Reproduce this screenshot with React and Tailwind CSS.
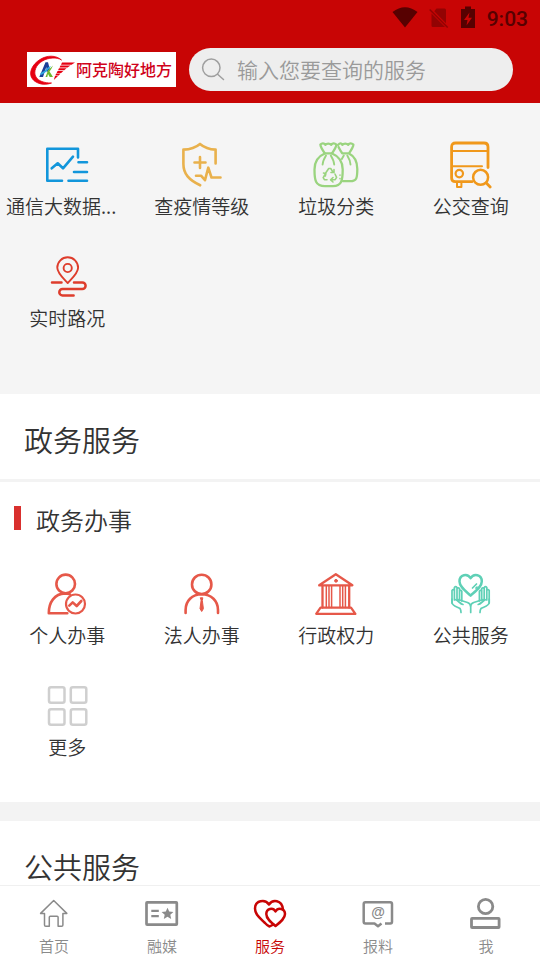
import React from "react";

function Icon({ color, children, width = 2.4 }) {
  return (
    <svg
      viewBox="0 0 48 48"
      className="size-12"
      fill="none"
      stroke={color}
      strokeWidth={width}
      strokeLinecap="round"
      strokeLinejoin="round"
      aria-hidden="true"
    >
      {children}
    </svg>
  );
}

const ChartIcon = () => (
  <Icon color="#1296db" width={2.6}>
    <path d="M35 16.5V7.7H4.3V39.7H19M8.7 27.3l6-5 5.3 5L30 15.7M35.5 21.3H44M31 31h13M25.5 39.7H44" />
  </Icon>
);

const ShieldIcon = () => (
  <Icon color="#e9b14c" width={2.6}>
    <path d="M37.6 22.5V8.6C31 8.3 26 6.3 22 2.9C18 6.3 12 8.3 5.4 8.6V23C5.4 33 11 39 22.2 44.3" />
    <path d="M22 16v11M16.5 21.5h11M18 34.7h5l4 4.5 3.3-12.5 3.2 9.8h9" />
  </Icon>
);

const BagsIcon = () => (
  <Icon color="#9ad47f" width={2.3}>
    <path d="M12.8 12.3C10.5 9 8.6 6 8.4 3.6C10 1.8 12 2 13.4 3.8C14.5 2.2 18 2.2 19.2 3.8C20.5 2 22.5 1.8 24.4 3.6C24.2 6 22.3 9 20 12.3Z" />
    <path d="M12.8 12.5C5.5 15.5 2.5 21 2.5 28.5C2.5 39 3.2 45.2 13 45.2h8C29.8 45.2 30.7 39 30.7 28.5C30.7 21 27.5 15.5 20 12.5" />
    <path d="M14 14.5c-1.5 2.5-3.2 5.5-3.4 9M18.8 14.5c1.5 2.5 3.2 5.5 3.4 9" strokeWidth="1.9" />
    <path d="M26 4C28 1.8 29.3 2.2 30.4 3.8C31.5 2.2 35 2.2 36.2 3.8C37.5 2 39.5 1.8 41.4 3.6C41.2 6 39.3 9 37 12.3H30.2C28.5 10 27.5 8 26.5 6M37 12.5C43 15.5 45.3 20 45.3 28C45.3 37 44.8 40.2 38 40.2H31" />
    <path d="M35.3 14.5c1.5 2.5 3 5.5 3.2 9M31.8 14.5l-2 3.5" strokeWidth="1.9" />
    <g strokeWidth="1.6">
      <path d="M14 31.5l2.7-4h2l2.2 3.4M22 28.5v3h-3M11.5 32l2.4.6-.6 2.4M13 33.5l-1.8 3.2 1.2 2H15M23 33l1.6 3.3-1.4 2.4h-4.4M21 36.5l-2.4 2.3 2.4 2.2" />
      <path d="M28 34v.2M28 37.5v.2" />
    </g>
  </Icon>
);

const BusIcon = () => (
  <Icon color="#f0981b" width={2.8}>
    <path d="M25 40.7H8.3Q4.6 40.7 4.6 37V6Q4.6 2 8.6 2H37Q41 2 41 6V26.5" />
    <path d="M5 10H40.5M5 25.2H35" strokeWidth="2" />
    <circle cx="12.3" cy="32.6" r="3.7" strokeWidth="2.2" />
    <path d="M10 41v5h4.4v-5" strokeWidth="2" />
    <circle cx="33.6" cy="36.3" r="7.5" strokeWidth="2.5" />
    <path d="M39.3 42l3.9 4" />
  </Icon>
);

const RouteIcon = () => (
  <Icon color="#de3d2c" width={1.9}>
    <path d="M24.7 30C20 25 14.3 20 14.3 14.7a10.4 10.4 0 0 1 20.8 0C35.1 20 29.4 25 24.7 30Z" />
    <circle cx="24.7" cy="15" r="4.1" />
    <path d="M9 29.4h9.5M31 29.4h8.3a3.3 3.3 0 0 1 0 6.6H19.5a3.2 3.2 0 0 0 0 6.4H30.6" strokeWidth="2.5" />
  </Icon>
);

const PersonIcon = () => (
  <Icon color="#e65849" width={2.6}>
    <circle cx="22.7" cy="13.9" r="9.3" />
    <path d="M24.3 43.2H5.8C5.8 32 11.5 24 22 23.4q3 0 5 1" />
    <circle cx="32.5" cy="34" r="9.5" strokeWidth="2.2" />
    <path d="M26.3 35.6l3.4-3.2 4 3.6 4.6-5" />
  </Icon>
);

const LegalIcon = () => (
  <Icon color="#e65849" width={2.6}>
    <circle cx="23.7" cy="14.4" r="9.7" />
    <path d="M7.6 43V40C7.6 31 14 24.3 23.7 24.3S40 31 40 40v3" />
    <path d="M22.6 27.8h2.2l-.5 2.7 1.1 8.2-1.7 2.8-1.7-2.8 1.1-8.2Z" fill="#e65849" strokeWidth="1" />
  </Icon>
);

const GovIcon = () => (
  <Icon color="#e65849" width={2.3}>
    <path d="M23.8 4.2L7.2 15.3H40.4Z" />
    <circle cx="24" cy="10.8" r="1.4" fill="#e65849" strokeWidth="1" />
    <path d="M10.5 16V37.5M37.2 16V37.5" />
    <path d="M14.3 16V37.5M17 16V37.5M19.6 16V37.5M28 16V37.5M30.7 16V37.5M33.4 16V37.5" strokeWidth="1.5" />
    <path d="M8.5 37.7H39L43.4 43.8H4.2Z" />
  </Icon>
);

const HandsIcon = () => (
  <Icon color="#5fd0b6" width={1.7}>
    <path d="M23.6 25.6C18 20.5 12.5 16.5 12.5 11.4C12.5 4.3 20.5 3 23.6 8.2C26.7 3 34.8 4.3 34.8 11.4C34.8 16.5 29.2 20.5 23.6 25.6Z" strokeWidth="2.5" />
    <path d="M25.5 18l4-4M29 18.2l1-1" />
    <path d="M5 33V20.5q1.2-1.6 2.4 0V30M7.4 21V17.5q1.3-1.6 2.6 0V30M10 18.5q1.3-1.4 2.5 0V30M12.5 21q1.2-1.2 2.3.2V31" />
    <path d="M5 29v3.5C5 36 11 37 13 38.5q1 1.5 1 4M8 29.5c3 .5 5 4.5 8 5M11 29.5l9.5 3q3 1.3 3 3.5" />
    <path d="M42.2 33V20.5q-1.2-1.6-2.4 0V30M39.8 21V17.5q-1.3-1.6-2.6 0V30M37.2 18.5q-1.3-1.4-2.5 0V30M34.7 21q-1.2-1.2-2.3.2V31" />
    <path d="M42.2 29v3.5C42.2 36 36 37 34 38.5q-1 1.5-1 4M39.2 29.5c-3 .5-5 4.5-8 5M36.2 29.5l-9.5 3q-3 1.3-3 3.5v6.5" />
  </Icon>
);

const MoreIcon = () => (
  <Icon color="#cfcfcf" width={2.5}>
    <rect x="6" y="5.2" width="15.5" height="15.5" rx="2" />
    <rect x="27.8" y="5.2" width="15.5" height="15.5" rx="2" />
    <rect x="6" y="27.2" width="15.5" height="15.5" rx="2" />
    <rect x="27.8" y="27.2" width="15.5" height="15.5" rx="2" />
  </Icon>
);

const quickServices = [
  { label: "通信大数据...", icon: ChartIcon, clipped: true },
  { label: "查疫情等级", icon: ShieldIcon },
  { label: "垃圾分类", icon: BagsIcon },
  { label: "公交查询", icon: BusIcon },
  { label: "实时路况", icon: RouteIcon },
];

const govServices = [
  { label: "个人办事", icon: PersonIcon },
  { label: "法人办事", icon: LegalIcon },
  { label: "行政权力", icon: GovIcon },
  { label: "公共服务", icon: HandsIcon },
  { label: "更多", icon: MoreIcon },
];

function ServiceGrid({ items }) {
  return (
    <div className="grid grid-cols-4 gap-y-[33px] pr-0.5">
      {items.map(({ label, icon: Glyph, clipped }) => (
        <button key={label} type="button" className="flex min-w-0 flex-col items-center gap-[3px] px-1.5">
          <Glyph />
          <span
            className={
              "w-full truncate text-[19px] leading-7 " + (clipped ? "text-left" : "text-center")
            }
          >
            {label}
          </span>
        </button>
      ))}
    </div>
  );
}

function SectionTitle({ children }) {
  return (
    <h2 className="border-b-3 border-[#f3f3f3] px-6 pb-[22px] pt-7 text-[29px] font-[350] leading-[35px]">
      {children}
    </h2>
  );
}

function Logo() {
  return (
    <div className="flex h-[35px] w-[149px] shrink-0 items-center bg-white text-[#d0021b]">
      <svg viewBox="0 0 49 35" className="h-[35px] w-[49px] shrink-0" aria-hidden="true">
        <path
          d="M34.5 8C29 3 20 3 13 7.5C5 12.5 1 21 5.500 27C9 31.5 17 34 24.500 31C17 31 11.500 29 9 25C6 20 9 12.500 15.500 9C21 5.500 30 5 34.500 8Z"
          fill="#e60012"
          stroke="#e60012"
          strokeWidth=".8"
        />
        <path d="M12.3 25L18.5 10.3H21L22.8 17L19.8 20.5L19.3 15L16 25Z" fill="#1b3f98" />
        <path d="M13.5 21q4-1.5 8-6l2.5-.8q-4 6-10.5 9Z" fill="#2ea7e0" />
        <path d="M18.5 25L21 18.5L26 13.5Q24 18 22.5 19.5L26 25H22.700L21 22L20.300 25Z" fill="#6cb92d" />
        <path
          d="M35 10.5H48L44.500 12.800H34ZM33.500 13.400H43.500L40.500 15.600H32.500ZM32 16.200H39.600L37.200 18.300H31ZM30.600 18.900H36.300L34.200 20.900H29.600ZM29.200 21.500H33.600L31.600 23.500H28.300ZM28 24.100H31L26.800 28Z"
          fill="#e60012"
        />
      </svg>
      <span className="whitespace-nowrap pb-px text-[16px] font-medium leading-6">阿克陶好地方</span>
    </div>
  );
}

function StatusBar() {
  return (
    <div className="flex h-9 items-center justify-end gap-[11px] pr-3 text-[#570101]">
      <svg viewBox="0 0 26 22" className="h-[22px] w-[26px]" aria-hidden="true">
        <path d="M0.500 5Q13-4.500 25.500 5L13 20.500Z" fill="currentColor" />
      </svg>
      <svg viewBox="0 0 20 22" className="h-[22px] w-5 text-[#930303]" aria-hidden="true">
        <path d="M7.500 1.500H15.500q1.500 0 1.500 1.500V16.200L5.300 4.200ZM2.500 6.500L16 20H4q-1.500 0-1.500-1.500Z" fill="currentColor" />
        <path d="M.7 2.500L18.700 20.500" stroke="currentColor" strokeWidth="1.600" />
      </svg>
      <svg viewBox="0 0 16 24" className="h-6 w-4" aria-hidden="true">
        <path
          fillRule="evenodd"
          d="M5 .5h6V3h4V22H1V3H5ZM9.500 6.500L4 14H7.500L6.500 19.500L12 11.800H8.500Z"
          fill="currentColor"
        />
      </svg>
      <span className="pt-0.5 font-['Roboto',sans-serif] text-[21px] font-medium leading-6">9:03</span>
    </div>
  );
}

function TabIcon({ children, width = 2.4 }) {
  return (
    <svg
      viewBox="0 0 36 36"
      className="size-9"
      fill="none"
      stroke="currentColor"
      strokeWidth={width}
      strokeLinejoin="round"
      aria-hidden="true"
    >
      {children}
    </svg>
  );
}

const tabs = [
  {
    label: "首页",
    icon: (
      <TabIcon width={1.5}>
        <path d="M17.7 5.5L4.6 18.4H8.500V30q0 1.300 1.300 1.300H13.300V22.300q0-1 1-1h6.800q1 0 1 1v9h3.500q1.300 0 1.300-1.300V18.400H30.800Z" />
      </TabIcon>
    ),
  },
  {
    label: "融媒",
    icon: (
      <TabIcon width={2.7}>
        <rect x="2.5" y="7.3" width="30.3" height="22.4" rx=".6" />
        <path d="M7.3 15.8h7.5M7.3 21.2h7.5" strokeWidth="2.3" />
        <path d="M23.5 12.8l1.7 3.8 4.2.4-3.1 2.8.9 4.2-3.7-2.2-3.7 2.2.9-4.2-3.1-2.8 4.2-.4Z" fill="currentColor" stroke="none" />
      </TabIcon>
    ),
  },
  {
    label: "服务",
    active: true,
    icon: (
      <TabIcon width={2.5}>
        <path d="M21.5 29.500L17.500 31.500Q15.500 30.800 13 28C7.500 22.500 3 19.500 3 13.500C3 5.500 13 3.500 17 9.500C20.500 4 30 4.500 31 14.500" strokeLinecap="round" />
        <path d="M23.500 31C18.500 27 14.300 23.500 14.300 19C14.300 13.500 21 12 23.500 16.500C26 12 33 13.500 33 19C33 23.500 28.500 27 23.500 31Z" />
      </TabIcon>
    ),
  },
  {
    label: "报料",
    icon: (
      <TabIcon width={2.5}>
        <path d="M25 28.4h5.3q1.7 0 1.7-1.7V9q0-1.7-1.7-1.7H5.4Q3.7 7.3 3.7 9v17.7q0 1.7 1.7 1.7H14.500L18 31.200L21.500 28.400" />
        <text x="18" y="22" textAnchor="middle" fill="currentColor" stroke="none" className="font-['Liberation_Sans',sans-serif] text-[14px] font-bold">
          @
        </text>
      </TabIcon>
    ),
  },
  {
    label: "我",
    icon: (
      <TabIcon width={2.8}>
        <circle cx="17.6" cy="11.5" r="7.2" />
        <rect x="3.5" y="23.3" width="27.6" height="9.2" rx=".6" />
      </TabIcon>
    ),
  },
];

export default function App() {
  return (
    <div className="flex h-screen flex-col bg-white font-['Noto_Sans_CJK_SC',sans-serif] font-[350] text-[#333333]">
      <header className="shrink-0 bg-[#c80505] pb-3">
        <StatusBar />
        <div className="flex items-center gap-[13px] px-[27px] pt-3">
          <Logo />
          <label className="flex h-[43px] min-w-0 flex-1 items-center gap-3 rounded-full bg-[#eeeeee] px-3">
            <svg viewBox="0 0 24 24" className="size-6 shrink-0" fill="none" stroke="#9f9f9f" strokeWidth="1.5" strokeLinecap="round" aria-hidden="true">
              <circle cx="10.3" cy="9.8" r="8.7" />
              <path d="M16.6 16.2L22.5 21.5" />
            </svg>
            <input
              type="search"
              aria-label="搜索服务"
              placeholder="输入您要查询的服务"
              className="min-w-0 flex-1 bg-transparent pb-0.5 text-[21px] leading-8 outline-none placeholder:text-[#9a9a9a]"
            />
          </label>
        </div>
      </header>

      <main className="min-h-0 flex-1 overflow-hidden">
        <section className="bg-[#f5f5f5] pb-[62px] pt-[38px]">
          <ServiceGrid items={quickServices} />
        </section>

        <section className="pb-[41px]">
          <SectionTitle>政务服务</SectionTitle>
          <div className="flex items-start gap-[15px] px-3.5 pb-8">
            <span className="mt-6 h-6 w-[7px] bg-[#d9302e]" />
            <h3 className="pt-5 text-2xl font-[350] leading-9">政务办事</h3>
          </div>
          <ServiceGrid items={govServices} />
        </section>

        <section className="border-t-[19px] border-[#f3f3f3]">
          <SectionTitle>公共服务</SectionTitle>
        </section>
      </main>

      <nav className="grid shrink-0 grid-cols-5 border-t border-[#f0f0f0] bg-white pb-[3px] pt-[9px]">
        {tabs.map(({ label, icon, active }) => (
          <button
            key={label}
            type="button"
            aria-current={active ? "page" : undefined}
            className={
              "flex flex-col items-center gap-1 " + (active ? "text-[#c80505]" : "text-[#8a8a8a]")
            }
          >
            {icon}
            <span className="text-[15px] leading-[22px]">{label}</span>
          </button>
        ))}
      </nav>
    </div>
  );
}
